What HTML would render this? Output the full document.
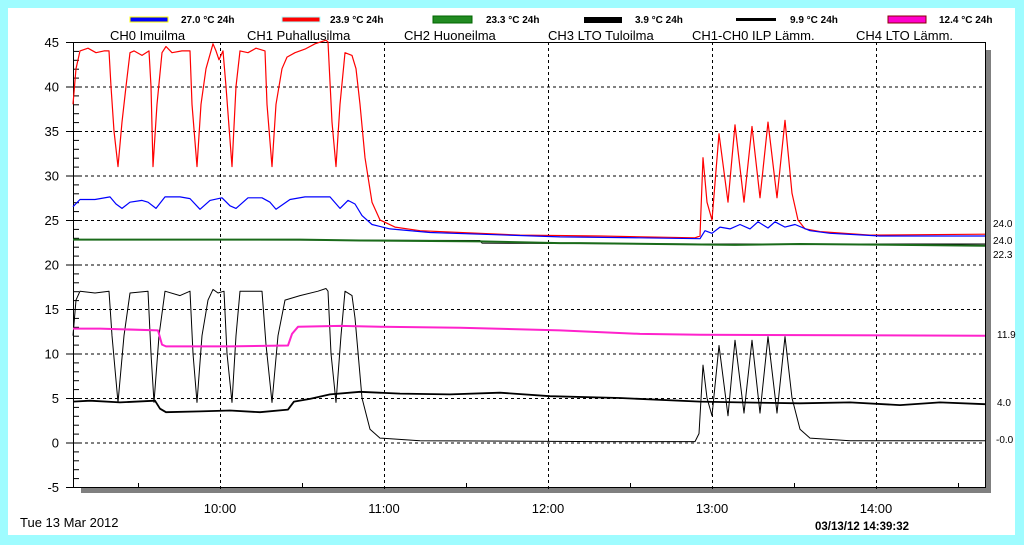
<!DOCTYPE html>
<html><head><meta charset="utf-8">
<style>
html,body{margin:0;padding:0;background:#9ffcff;}
body{width:1024px;height:545px;position:relative;overflow:hidden;font-family:"Liberation Sans",sans-serif;}
#panel{position:absolute;left:8px;top:8px;width:1007px;height:527px;background:#fff;}
svg{position:absolute;left:0;top:0;}
text{font-family:"Liberation Sans",sans-serif;}
</style></head><body>
<div id="panel"></div>
<svg id="s" width="1024" height="545" xmlns="http://www.w3.org/2000/svg">
<!-- shadows -->
<rect x="985" y="50" width="6" height="443" fill="#808080"/>
<rect x="81" y="487" width="910" height="6" fill="#808080"/>
<g id="grid" stroke="#000" stroke-width="1" stroke-dasharray="3,3"></g>
<rect x="73.5" y="42.5" width="912" height="445" fill="none" stroke="#000"/>
<g id="ticks" stroke="#000"></g>
<g id="lines" fill="none"></g>
<g font-size="13" fill="#000" text-anchor="end" id="ylab"></g>
<g font-size="13" text-anchor="middle">
<text x="220" y="513">10:00</text><text x="384" y="513">11:00</text><text x="548" y="513">12:00</text><text x="712" y="513">13:00</text><text x="876" y="513">14:00</text>
</g>
<text x="20" y="527" font-size="13">Tue 13 Mar 2012</text>
<text x="815" y="530" font-size="11.5" font-weight="bold">03/13/12 14:39:32</text>
<g font-size="10" font-weight="bold">
<rect x="130" y="17" width="38" height="5" fill="#0000ff" stroke="#ff0"/><text x="181" y="23">27.0 °C 24h</text>
<rect x="282" y="17" width="38" height="5" fill="#ff0000" stroke="#aff"/><text x="330" y="23">23.9 °C 24h</text>
<rect x="433" y="16" width="39" height="7" fill="#228b22" stroke="#060"/><text x="486" y="23">23.3 °C 24h</text>
<rect x="584" y="17" width="38" height="6" fill="#000"/><text x="635" y="23">3.9 °C 24h</text>
<rect x="736" y="18" width="40" height="3" fill="#000"/><text x="790" y="23">9.9 °C 24h</text>
<rect x="888" y="16" width="38" height="7" fill="#ff00cc" stroke="#800"/><text x="939" y="23">12.4 °C 24h</text>
</g>
<g font-size="13">
<text x="110" y="40">CH0 Imuilma</text><text x="247" y="40">CH1 Puhallusilma</text><text x="404" y="40">CH2 Huoneilma</text><text x="548" y="40">CH3 LTO Tuloilma</text><text x="692" y="40">CH1-CH0 ILP Lämm.</text><text x="856" y="40">CH4 LTO Lämm.</text>
</g>
<g font-size="10">
<text x="993" y="227">24.0</text><text x="993" y="244">24.0</text><text x="993" y="258">22.3</text><text x="997" y="338">11.9</text><text x="997" y="406">4.0</text><text x="996" y="443">-0.0</text>
</g>
</svg>
<script>
const Y=v=>42+(45-v)*8.9;
const g=document.getElementById('grid'),t=document.getElementById('ticks'),yl=document.getElementById('ylab'),L=document.getElementById('lines');
const NS='http://www.w3.org/2000/svg';
function el(p,n,a,txt){const e=document.createElementNS(NS,n);for(const k in a)e.setAttribute(k,a[k]);if(txt!=null)e.textContent=txt;p.appendChild(e);return e;}
for(let v=40;v>=-5;v-=5){if(v>-5&&v<45)el(g,'line',{x1:73,x2:985,y1:Y(v)+.5,y2:Y(v)+.5});}
for(const x of [220,384,548,712,876])el(g,'line',{x1:x+.5,x2:x+.5,y1:42,y2:492});
for(let v=45;v>=-5;v-=5)el(yl,'text',{x:59,y:Y(v)+5},String(v));
for(let v=45;v>=-5;v--){el(t,'line',{x1:v%5?73:66,x2:79,y1:Y(v)+.5,y2:Y(v)+.5});}
for(const x of [138,302,466,630,794,958])el(t,'line',{x1:x+.5,x2:x+.5,y1:483,y2:487});
function pl(pts,col,w){el(L,'polyline',{points:pts.map(p=>p[0]+','+Y(p[1]).toFixed(1)).join(' '),stroke:col,'stroke-width':w,'stroke-linejoin':'round'});}
// pulse builder
function pulses(base,hi,lo,segs){const p=[];for(const s of segs)p.push(...s);return p;}
const red=[[73,38],[76,42],[80,44],[88,44.3],[96,43.8],[104,44],[109,44],[111,40],[114,35],[118,31],[122,36],[126,40],[130,43.8],[134,44],[142,43.5],[149,44],[151,40],[153,31],[157,38],[162,43.8],[166,44.5],[172,43.8],[182,44],[190,44],[192,38],[197,31],[201,38],[206,42],[213,44.8],[216,44],[219,43],[223,44],[226,40],[232,31],[236,40],[240,44],[248,43.8],[256,44.3],[265,44],[267,38],[272,31],[276,38],[282,42],[287,43.3],[295,43.8],[305,44.2],[315,44.8],[326,45.2],[328,45],[332,36],[336,31],[340,38],[345,43.8],[352,43.5],[356,42],[360,38],[365,32],[372,27],[380,25],[395,24.2],[420,23.8],[460,23.6],[520,23.3],[600,23.2],[695,23],[700,23.2],[703,32],[707,27],[712,25],[719,34.7],[728,27],[735,35.7],[744,27],[752,35.5],[760,27.5],[768,36],[777,27.5],[785,36.2],[792,28],[798,25],[805,24],[820,23.7],[870,23.3],[985,23.4]];
pl(red,'#ff0000',1.2);
const blue=[[73,26.5],[80,27.3],[95,27.3],[110,27.6],[116,26.8],[122,26.3],[130,27],[142,27.2],[148,27],[156,26.3],[165,27.6],[180,27.6],[190,27.4],[200,26.2],[210,27.2],[222,27.5],[230,26.6],[236,26.3],[248,27.5],[262,27.5],[270,27],[276,26.2],[290,27.3],[305,27.6],[330,27.6],[340,26.3],[348,27.2],[355,26.8],[362,25.5],[372,24.5],[390,24],[430,23.6],[480,23.4],[560,23.1],[640,23],[700,22.9],[705,23.8],[712,23.5],[720,24.2],[730,24],[740,24.5],[750,24],[758,24.8],[768,24.1],[775,24.8],[785,24.2],[795,24.5],[810,23.8],[830,23.5],[880,23.2],[985,23.2]];
pl(blue,'#0000ff',1.2);
pl([[73,22.8],[480,22.7],[482,22.4],[700,22.3],[985,22.3]],'#000',1);
pl([[73,22.8],[300,22.8],[360,22.7],[480,22.6],[560,22.4],[580,22.4],[735,22.2],[800,22.3],[900,22.2],[985,22.1]],'#1a6b1a',2);
const blk=[[73,12],[76,16],[80,17],[95,16.8],[109,17],[112,12],[118,4.5],[124,12],[130,16.8],[148,17],[151,10],[154,4.5],[159,12],[165,17],[180,16.5],[190,17],[193,10],[197,4.5],[202,12],[208,16],[213,17.2],[218,16.8],[224,17],[227,10],[232,4.5],[236,12],[240,17],[262,17],[266,11],[272,4.5],[278,12],[285,16],[300,16.5],[318,17],[326,17.3],[328,17],[331,10],[336,4.5],[341,12],[345,17],[352,16.5],[355,14],[362,5],[370,1.5],[380,0.5],[420,0.2],[600,0.1],[695,0.1],[699,1],[703,8.7],[707,5],[712,3],[719,10.9],[728,3],[735,11.5],[744,3.3],[752,11.5],[760,3.3],[768,11.9],[777,3.3],[785,11.9],[792,5],[800,1.5],[810,0.5],[850,0.2],[985,0.2]];
pl(blk,'#000',1);
const pink=[[73,12.8],[100,12.8],[158,12.6],[162,11],[166,10.8],[230,10.8],[288,10.9],[292,12.2],[298,13],[340,13.1],[380,13],[460,12.9],[560,12.6],[640,12.2],[700,12.1],[985,12]];
pl(pink,'#ff22cc',2);
const thick=[[73,4.6],[90,4.7],[120,4.5],[155,4.7],[160,3.8],[166,3.4],[200,3.5],[230,3.6],[260,3.4],[288,3.7],[294,4.6],[310,4.9],[330,5.4],[360,5.7],[400,5.5],[450,5.4],[500,5.6],[550,5.2],[620,5],[700,4.6],[740,4.5],[800,4.4],[850,4.5],[900,4.2],[940,4.5],[985,4.3]];
pl(thick,'#000',1.8);
</script>
</body></html>
